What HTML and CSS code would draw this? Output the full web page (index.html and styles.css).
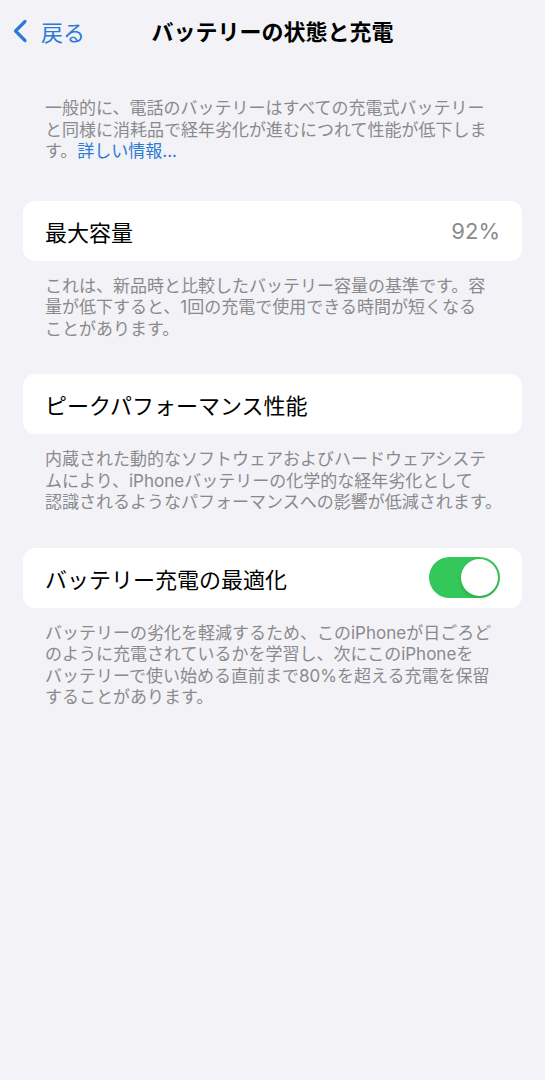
FILE: index.html
```html
<!DOCTYPE html>
<html lang="ja">
<head>
  <meta charset="UTF-8">
  <meta name="viewport" content="width=device-width, initial-scale=1.0">
  <title>バッテリーの状態と充電</title>
  <link rel="stylesheet" href="styles.css">
</head>
<body>
  <!-- Navigation bar -->
  <header class="navbar">
    <a class="back" href="#">
      <svg class="chevron" width="16" height="24" viewBox="0 0 16 24">
        <path d="M13 2.5 L3.5 12 L13 21.5" fill="none" stroke="currentColor" stroke-width="3.2" stroke-linecap="round" stroke-linejoin="round"/>
      </svg>
      <span>戻る</span>
    </a>
    <h1 class="title">バッテリーの状態と充電</h1>
  </header>

  <main class="content">
    <p class="note intro">一般的に、電話のバッテリーはすべての充電式バッテリー<br>と同様に消耗品で経年劣化が進むにつれて性能が低下しま<br>す。<a class="link" href="#">詳しい情報...</a></p>

    <!-- Maximum capacity -->
    <div class="cell">
      <span class="label">最大容量</span>
      <span class="value">92%</span>
    </div>
    <p class="note">これは、新品時と比較したバッテリー容量の基準です。容<br>量が低下すると、1回の充電で使用できる時間が短くなる<br>ことがあります。</p>

    <!-- Peak performance -->
    <div class="cell">
      <span class="label">ピークパフォーマンス性能</span>
    </div>
    <p class="note">内蔵された動的なソフトウェアおよびハードウェアシステ<br>ムにより、iPhoneバッテリーの化学的な経年劣化として<br>認識されるようなパフォーマンスへの影響が低減されます。</p>

    <!-- Optimized charging -->
    <div class="cell">
      <span class="label">バッテリー充電の最適化</span>
      <span class="toggle on"><span class="knob"></span></span>
    </div>
    <p class="note">バッテリーの劣化を軽減するため、このiPhoneが日ごろど<br>のように充電されているかを学習し、次にこのiPhoneを<br>バッテリーで使い始める直前まで80%を超える充電を保留<br>することがあります。</p>
  </main>
</body>
</html>
```

FILE: styles.css
```css
body {
  margin: 0;
  background-color: #f2f2f7;
  font-family: Inter, "Noto Sans CJK JP", sans-serif;
  color: #000;
}

.navbar {
  position: relative;
  height: 60px;
  display: flex;
  align-items: center;
  justify-content: center;
  margin-bottom: 2px;
}

.back {
  position: absolute;
  left: 12px;
  top: 15px;
  display: flex;
  align-items: center;
  gap: 13px;
  color: #2a7ad6;
  text-decoration: none;
  font-size: 22px;
}

.chevron {
  display: block;
}

.title {
  margin: 0;
  font-size: 22px;
  font-weight: 700;
}

.content {
  padding: 0 23px;
}

.note {
  margin: 0 0 34px 0;
  padding: 15px 22px 0 22px;
  font-size: 17px;
  line-height: 21.5px;
  color: #8a8a8e;
  white-space: nowrap;
}

.intro {
  padding-top: 36px;
  margin-bottom: 38px;
}

.link {
  color: #2a7ad6;
  text-decoration: none;
}

.cell {
  height: 60px;
  display: flex;
  align-items: center;
  justify-content: space-between;
  padding: 0 22px;
  background-color: #fff;
  border-radius: 12px;
}

.label {
  font-size: 22px;
}

.value {
  font-size: 22px;
  color: #8a8a8e;
}

.toggle {
  width: 71px;
  height: 41px;
  border-radius: 21px;
  background-color: #34c759;
  display: flex;
  align-items: center;
  justify-content: flex-end;
  padding: 0 2px;
  box-sizing: border-box;
}

.knob {
  width: 37px;
  height: 37px;
  border-radius: 50%;
  background-color: #fff;
  box-shadow: 0 2px 4px rgba(0, 0, 0, 0.15);
}
```
